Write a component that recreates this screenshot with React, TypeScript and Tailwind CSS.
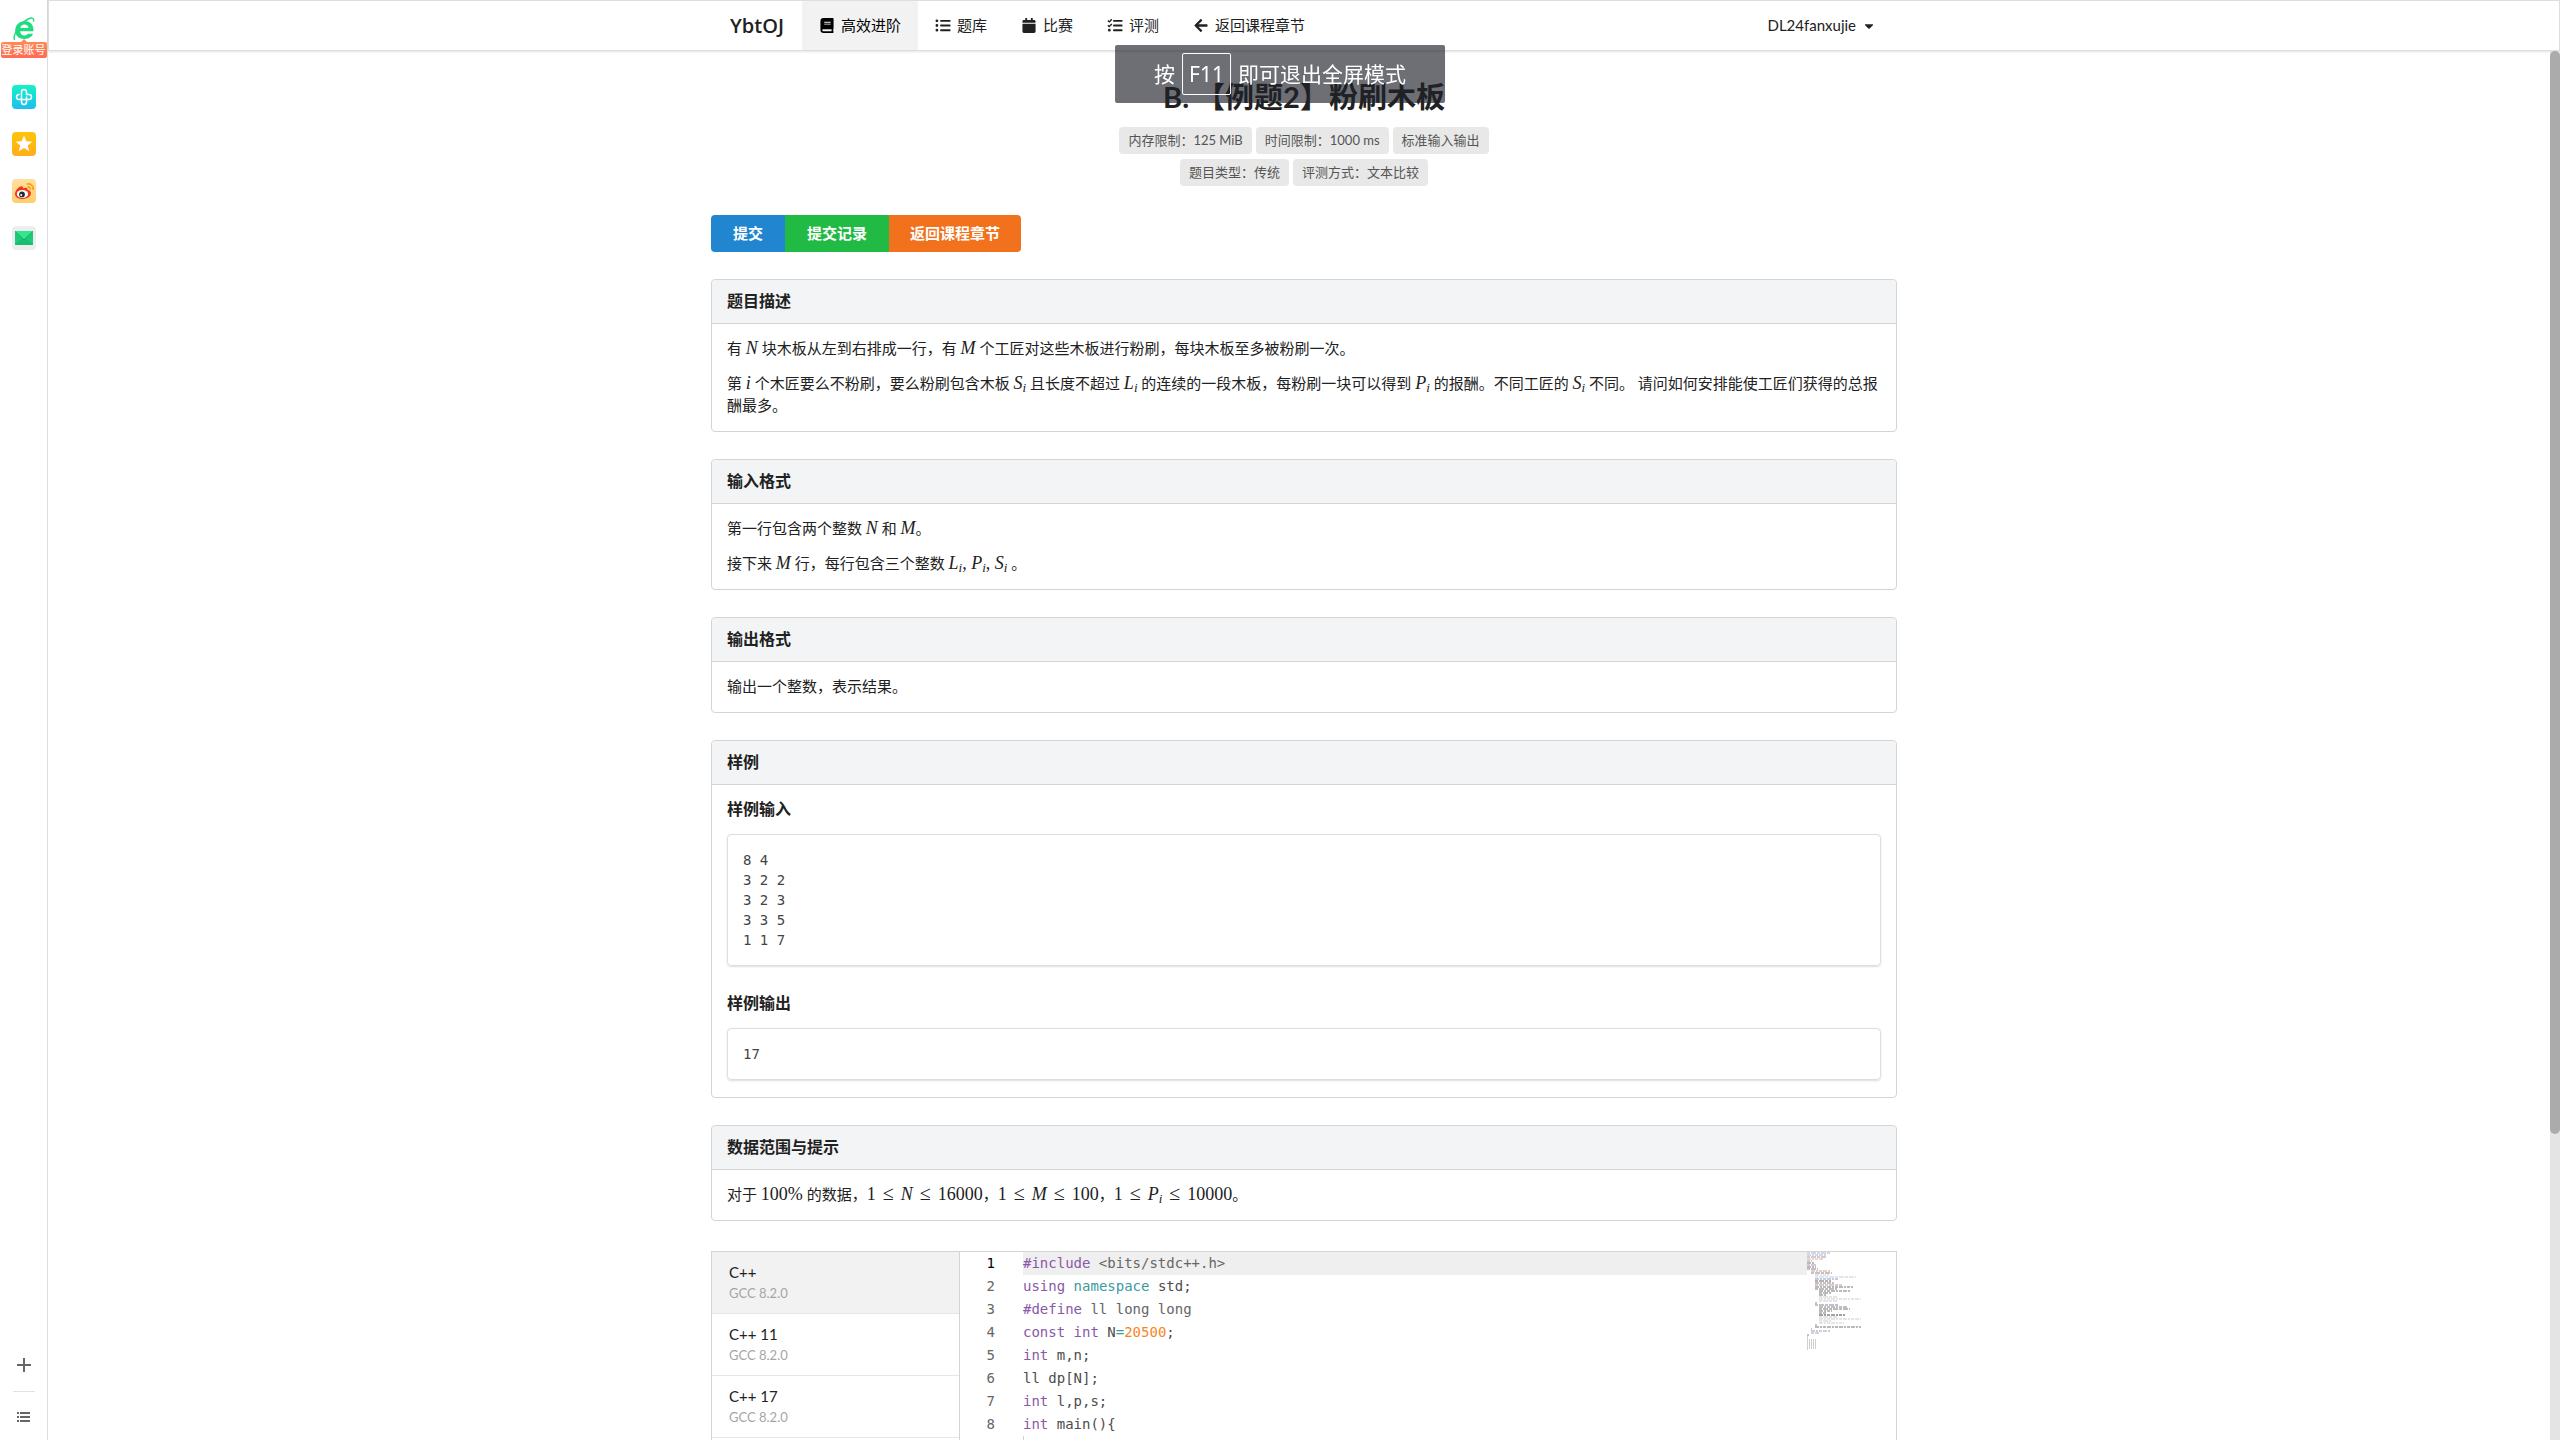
import type { ReactNode } from "react";
import {
  FaArrowLeft,
  FaBook,
  FaCalendar,
  FaCaretDown,
  FaListUl,
  FaTasks,
} from "react-icons/fa";

const navItems = [
  { label: "高效进阶", icon: FaBook, active: true },
  { label: "题库", icon: FaListUl },
  { label: "比赛", icon: FaCalendar },
  { label: "评测", icon: FaTasks },
  { label: "返回课程章节", icon: FaArrowLeft },
];

const labelRows = [
  ["内存限制：125 MiB", "时间限制：1000 ms", "标准输入输出"],
  ["题目类型：传统", "评测方式：文本比较"],
];

const languages = [
  { name: "C++", version: "GCC 8.2.0", active: true },
  { name: "C++ 11", version: "GCC 8.2.0" },
  { name: "C++ 17", version: "GCC 8.2.0" },
];

const kw = "text-[#8959a8]";
const ns = "text-[#3e999f]";
const num = "text-[#f5871f]";
const dim = "text-[#666666]";

const codeLines: [string, string][][] = [
  [["#include", kw], [" <bits/stdc++.h>", dim]],
  [["using", kw], [" ", ""], ["namespace", ns], [" std;", ""]],
  [["#define", kw], [" ll long long", dim]],
  [["const", kw], [" ", ""], ["int", kw], [" N", ""], ["=", ns], ["20500", num], [";", ""]],
  [["int", kw], [" m,n;", ""]],
  [["ll dp[N];", ""]],
  [["int", kw], [" l,p,s;", ""]],
  [["int", kw], [" main(){", ""]],
];

// indent, length, color of each minimap row
const minimapRows: [number, number, string][] = [
  [0, 23, "#b9a5c9"], [0, 19, "#9fb9c0"], [0, 20, "#a892b8"], [0, 17, "#d9b48f"],
  [0, 5, "#a892b8"], [0, 7, "#777777"], [0, 9, "#a892b8"], [0, 9, "#777777"],
  [0, 11, "#8f7d9c"], [4, 19, "#c3a777"], [4, 21, "#8f7d9c"], [8, 14, "#cccccc"],
  [8, 41, "#cccccc"], [8, 24, "#7ba3c9"], [8, 16, "#666666"], [8, 19, "#8f7d9c"],
  [8, 27, "#b59a80"], [8, 38, "#777777"], [8, 22, "#777f80"], [12, 31, "#777777"],
  [12, 12, "#777777"], [12, 7, "#777777"], [12, 18, "#cccccc"], [12, 42, "#cccccc"],
  [12, 18, "#cccccc"], [8, 2, "#888888"], [8, 23, "#8f7d9c"], [12, 29, "#6c8585"],
  [12, 31, "#777777"], [12, 13, "#777777"], [12, 7, "#777777"], [12, 26, "#444444"],
  [12, 18, "#cccccc"], [12, 42, "#cccccc"], [12, 12, "#cccccc"], [12, 25, "#cccccc"],
  [8, 2, "#888888"], [8, 46, "#777777"], [4, 1, "#888888"], [4, 20, "#8ba3b9"],
  [4, 8, "#c39aa0"], [0, 2, "#888888"],
];

function M({ children, sub }: { children: ReactNode; sub?: string }) {
  return (
    <span className="font-['Liberation_Serif',serif] text-[18px] leading-none italic">
      {children}
      {sub && <sub className="bottom-[-3px] text-[13px] leading-none">{sub}</sub>}
    </span>
  );
}

function D({ children }: { children: ReactNode }) {
  return (
    <span className="font-['Liberation_Serif',serif] text-[18px] leading-none">
      {children}
    </span>
  );
}

function Le() {
  return (
    <span className="mx-[7px] font-['Liberation_Serif',serif] text-[20px] leading-none">
      ≤
    </span>
  );
}

function Card({ title, children }: { title: string; children: ReactNode }) {
  return (
    <section className="mb-[27px] rounded border border-[#d4d4d5]">
      <h2 className="rounded-t border-b border-[#d4d4d5] bg-[#f3f4f5] px-[15px] pt-[10px] pb-[11px] text-base leading-[22px] font-bold">
        {title}
      </h2>
      <div className="flex flex-col gap-[13px] px-[15px] pt-[13px] pb-[15px] leading-[22px]">
        {children}
      </div>
    </section>
  );
}

function Sample({ title, text }: { title: string; text: string }) {
  return (
    <div>
      <h3 className="mb-[14px] text-base leading-[22px] font-bold">{title}</h3>
      <pre className="rounded border border-[#dededf] p-[15px] font-['DejaVu_Sans_Mono',monospace] text-[14px] leading-5 text-[#444444] shadow-[0_1px_2px_rgba(34,36,38,0.15)]">
        {text}
      </pre>
    </div>
  );
}

function Sidebar() {
  return (
    <aside className="flex w-12 shrink-0 flex-col items-center border-r border-[#dddddd]">
      <a href="#login" className="flex flex-col items-center pt-[17px]">
        <svg width="22" height="24" viewBox="0 0 22 24" fill="none">
          <path
            d="M5 14.2H20.5C20.8 7.500 17 4 12 4C6.500 4 2.200 8 2.200 13.500C2.200 18.500 6 22 11.500 22C15.500 22 18.800 20 20 16.800H14.800C14 18 13 18.500 11.600 18.500C9 18.500 7.300 17 7.200 14.200M7.300 11C7.700 8.800 9.300 7.400 11.500 7.400C13.800 7.400 15.300 8.800 15.500 11Z"
            fill="#1fdc80"
            fillRule="evenodd"
          />
          <path
            d="M1.500 23C0 20 3 12.500 8.500 7C13 2.500 18 0 20 1.500C20.800 2.100 20.900 3.200 20.400 4.500"
            stroke="#1fdc80"
            strokeWidth="1.400"
          />
        </svg>
        <span className="relative mt-px rounded-xs bg-linear-to-b from-[#ff8a55] to-[#ff6b55] px-px text-[11px] leading-4 whitespace-nowrap text-white">
          <svg className="absolute -top-[3px] left-5" width="6" height="3" viewBox="0 0 6 3">
            <path d="M0 3L3 0L6 3Z" fill="#ff8a55" />
          </svg>
          登录账号
        </span>
      </a>
      <nav className="mt-[27px] flex flex-col gap-[23px]">
        <a href="#apps" aria-label="应用">
          <svg width="24" height="24" viewBox="0 0 24 24">
            <defs>
              <linearGradient id="apps" x1="0" y1="0" x2="0" y2="1">
                <stop offset="0" stopColor="#14f3c5" />
                <stop offset="1" stopColor="#20bdf0" />
              </linearGradient>
            </defs>
            <rect width="24" height="24" rx="4" fill="url(#apps)" />
            <path
              d="M9.500 14V7A2.500 2.500 0 0 1 14.500 7V9.500M14.500 12V17A2.500 2.500 0 0 1 9.500 17V14.500M9.500 14.500H7A2.500 2.500 0 0 1 7 9.500M14.500 9.500H17A2.500 2.500 0 0 1 17 14.500H9.500"
              fill="none"
              stroke="#fff"
              strokeWidth="1.500"
              strokeLinecap="round"
            />
          </svg>
        </a>
        <a href="#favorites" aria-label="收藏">
          <svg width="24" height="24" viewBox="0 0 24 24">
            <defs>
              <linearGradient id="fav" x1="0" y1="0" x2="0" y2="1">
                <stop offset="0" stopColor="#ffc40a" />
                <stop offset="1" stopColor="#ffae1c" />
              </linearGradient>
            </defs>
            <rect width="24" height="24" rx="4" fill="url(#fav)" />
            <path
              d="M12 3.600L14.300 9.300L20.300 9.700L15.700 13.500L17.200 19.300L12 16.100L6.800 19.300L8.300 13.500L3.700 9.700L9.700 9.300Z"
              fill="#fff"
            />
          </svg>
        </a>
        <a href="#weibo" aria-label="微博">
          <svg width="24" height="24" viewBox="0 0 24 24">
            <defs>
              <linearGradient id="weibo" x1="0" y1="0" x2="0" y2="1">
                <stop offset="0" stopColor="#ffe0a0" />
                <stop offset="1" stopColor="#ffce6b" />
              </linearGradient>
            </defs>
            <rect width="24" height="24" rx="4" fill="url(#weibo)" />
            <path
              d="M3 15C3 11.500 7 7.500 9.500 7.300C11 7.200 11.300 8.300 11 9.300C13 8.400 15.800 8.200 15.500 10.700C17.500 11.200 19 12.300 19 14.300C19 17.500 15 20 10.700 20C6.500 20 3 18 3 15Z"
              fill="#ee3a1c"
            />
            <ellipse cx="10.500" cy="15" rx="5.700" ry="4" fill="#fff" />
            <circle cx="10" cy="15.400" r="2.900" fill="#2b2b33" />
            <circle cx="9.200" cy="16" r="1" fill="#fff" />
            <path
              d="M14.500 5.200C18.500 4 22 7 21 11M15.300 8C17.200 7.500 18.800 9 18.300 10.800"
              fill="none"
              stroke="#f7a21b"
              strokeWidth="1.700"
            />
          </svg>
        </a>
        <a href="#mail" aria-label="邮箱">
          <svg width="24" height="24" viewBox="0 0 24 24">
            <rect width="24" height="24" rx="4" fill="#ededed" />
            <rect x="3" y="5" width="18" height="14" fill="#1fc97a" />
            <path d="M3 19L9.500 12.500H14.500L21 19Z" fill="#18bd6f" />
            <path d="M3 5H21L12 13.500Z" fill="#33e58c" />
            <path d="M3 5.500L12 13.800L21 5.500" fill="none" stroke="#12a45c" strokeWidth="0.700" />
          </svg>
        </a>
      </nav>
      <div className="mt-auto flex flex-col items-center pb-[18px]">
        <button type="button" aria-label="添加">
          <svg width="14" height="14" viewBox="0 0 14 14" fill="#666">
            <path d="M6 0H8V6H14V8H8V14H6V8H0V6H6Z" />
          </svg>
        </button>
        <hr className="mt-[19px] mb-[20px] w-[22px] border-[#e2e2e2]" />
        <button type="button" aria-label="菜单">
          <svg width="13" height="10" viewBox="0 0 13 10" fill="#666">
            <path d="M0 0H2V2H0ZM3 0H13V2H3ZM0 4H2V6H0ZM3 4H13V6H3ZM0 8H2V10H0ZM3 8H13V10H3Z" />
          </svg>
        </button>
      </div>
    </aside>
  );
}

function Header() {
  return (
    <header className="shrink-0 border border-[#dededf] bg-white shadow-[0_1px_2px_rgba(34,36,38,0.12)]">
      <div className="mx-auto flex h-[49px] max-w-[1186px] items-stretch">
        <a
          href="#home"
          className="flex items-center pr-[18px] pl-[19px] font-['Open_Sans',sans-serif] text-[20px] font-semibold"
        >
          YbtOJ
        </a>
        <nav className="flex">
          {navItems.map(({ label, icon: Icon, active }) => (
            <a
              key={label}
              href="#nav"
              className={`flex items-center gap-[6px] px-[17px] ${active ? "bg-[#f2f2f2] text-black" : ""}`}
            >
              <Icon size={15} className="w-4" />
              {label}
            </a>
          ))}
        </nav>
        <button type="button" className="ml-auto flex items-center gap-[6px] px-[21px]">
          DL24fanxujie
          <FaCaretDown size={14} />
        </button>
      </div>
    </header>
  );
}

function Editor() {
  return (
    <div className="mt-[30px] flex h-[520px] border border-[#d4d4d5]">
      <div className="w-[248px] shrink-0 border-r border-[#d4d4d5]">
        {languages.map((lang) => (
          <button
            key={lang.name}
            type="button"
            className={`block w-full border-b border-[#e6e6e7] px-[17px] pt-[9px] pb-[10px] text-left ${lang.active ? "bg-[#f2f2f2]" : ""}`}
          >
            <span className="block leading-[22px]">{lang.name}</span>
            <span className="block text-[13px] leading-5 text-[#a5a5a5]">
              {lang.version}
            </span>
          </button>
        ))}
      </div>
      <pre className="min-w-0 flex-1 overflow-hidden font-['DejaVu_Sans_Mono',monospace] text-[14px] leading-[23px] text-[#4d4d4c]">
        {codeLines.map((line, i) => (
          <div key={i} className="flex">
            <span className={`w-[35px] shrink-0 text-right ${i === 0 ? "text-black" : "text-[#666666]"}`}>
              {i + 1}
            </span>
            <code className={`ml-[28px] flex-1 font-['DejaVu_Sans_Mono',monospace] ${i === 0 ? "bg-[#efefef]" : ""}`}>
              {line.map(([text, color], j) => (
                <span key={j} className={color}>
                  {text}
                </span>
              ))}
            </code>
          </div>
        ))}
        <div className="ml-[63px] h-[23px] border-l border-[#d3d3d3]" />
      </pre>
      <svg className="shrink-0" width="89" height="200" viewBox="0 0 89 200">
        {minimapRows.map(([indent, length, color], i) => (
          <path
            key={i}
            d={`M${indent} ${i * 2 + 1}h${length}`}
            stroke={color}
            strokeWidth="1.200"
            strokeDasharray={i % 2 ? "4 1 2 1 3 1" : "3 1 5 1"}
          />
        ))}
        <path d="M0.500 84V98M2.500 87V97M4.500 87V97M6.500 87V97M8.500 87V97" stroke="#d0d0d0" />
      </svg>
    </div>
  );
}

export default function App() {
  return (
    <div className="flex h-screen overflow-hidden bg-white font-[Lato,'Noto_Sans_CJK_SC',sans-serif] text-[15px] text-[#212121]">
      <Sidebar />
      <div className="flex min-w-0 flex-1 flex-col">
        <Header />
        <div className="flex min-h-0 flex-1">
          <main className="min-w-0 flex-1 overflow-hidden pl-[10px]">
            <div className="mx-auto max-w-[1186px]">
              <h1 className="pt-[27px] text-center text-[29px] leading-[38px] font-bold">
                B. 【例题2】粉刷木板
              </h1>
              <div className="mt-[11px] flex flex-col items-center gap-[5px]">
                {labelRows.map((row) => (
                  <div key={row[0]} className="flex gap-1">
                    {row.map((label) => (
                      <span
                        key={label}
                        className="rounded bg-[#e8e8e8] px-[9px] text-[13px] leading-[27px] text-[#555555]"
                      >
                        {label}
                      </span>
                    ))}
                  </div>
                ))}
              </div>

              <div className="mt-[29px] mb-[27px] flex leading-[37px] font-bold text-white">
                <a href="#submit" className="rounded-l bg-[#2185d0] px-[22px]">
                  提交
                </a>
                <a href="#submissions" className="bg-[#21ba45] px-[22px]">
                  提交记录
                </a>
                <a href="#chapter" className="rounded-r bg-[#f2711c] px-[21px]">
                  返回课程章节
                </a>
              </div>

              <Card title="题目描述">
                <p>
                  有 <M>N</M> 块木板从左到右排成一行，有 <M>M</M>{" "}
                  个工匠对这些木板进行粉刷，每块木板至多被粉刷一次。
                </p>
                <p>
                  第 <M>i</M> 个木匠要么不粉刷，要么粉刷包含木板 <M sub="i">S</M>{" "}
                  且长度不超过 <M sub="i">L</M>{" "}
                  的连续的一段木板，每粉刷一块可以得到 <M sub="i">P</M>{" "}
                  的报酬。不同工匠的 <M sub="i">S</M> 不同。
                  请问如何安排能使工匠们获得的总报酬最多。
                </p>
              </Card>

              <Card title="输入格式">
                <p>
                  第一行包含两个整数 <M>N</M> 和 <M>M</M>。
                </p>
                <p>
                  接下来 <M>M</M> 行，每行包含三个整数 <M sub="i">L</M>
                  <D>, </D>
                  <M sub="i">P</M>
                  <D>, </D>
                  <M sub="i">S</M> 。
                </p>
              </Card>

              <Card title="输出格式">
                <p>输出一个整数，表示结果。</p>
              </Card>

              <Card title="样例">
                <div className="flex flex-col gap-[26px] pb-[2px]">
                  <Sample title="样例输入" text={"8 4\n3 2 2\n3 2 3\n3 3 5\n1 1 7"} />
                  <Sample title="样例输出" text="17" />
                </div>
              </Card>

              <Card title="数据范围与提示">
                <p>
                  对于 <D>100%</D> 的数据，
                  <D>1</D>
                  <Le />
                  <M>N</M>
                  <Le />
                  <D>16000</D>，<D>1</D>
                  <Le />
                  <M>M</M>
                  <Le />
                  <D>100</D>，<D>1</D>
                  <Le />
                  <M sub="i">P</M>
                  <Le />
                  <D>10000</D>。
                </p>
              </Card>

              <Editor />
            </div>
          </main>
          <div className="w-[10px] shrink-0 bg-[#e4e4e4]">
            <div className="h-[78%] rounded-full bg-[#ababab]" />
          </div>
        </div>
      </div>

      <div className="fixed top-[45px] left-1/2 flex h-[58px] -translate-x-1/2 items-center gap-[7px] rounded-xs bg-[#1e2229]/65 px-[39px] text-[21px] whitespace-nowrap text-white">
        按
        <kbd className="rounded-xs border border-white px-[6px] font-['Noto_Sans',sans-serif] leading-10">
          F11
        </kbd>
        即可退出全屏模式
      </div>
    </div>
  );
}
